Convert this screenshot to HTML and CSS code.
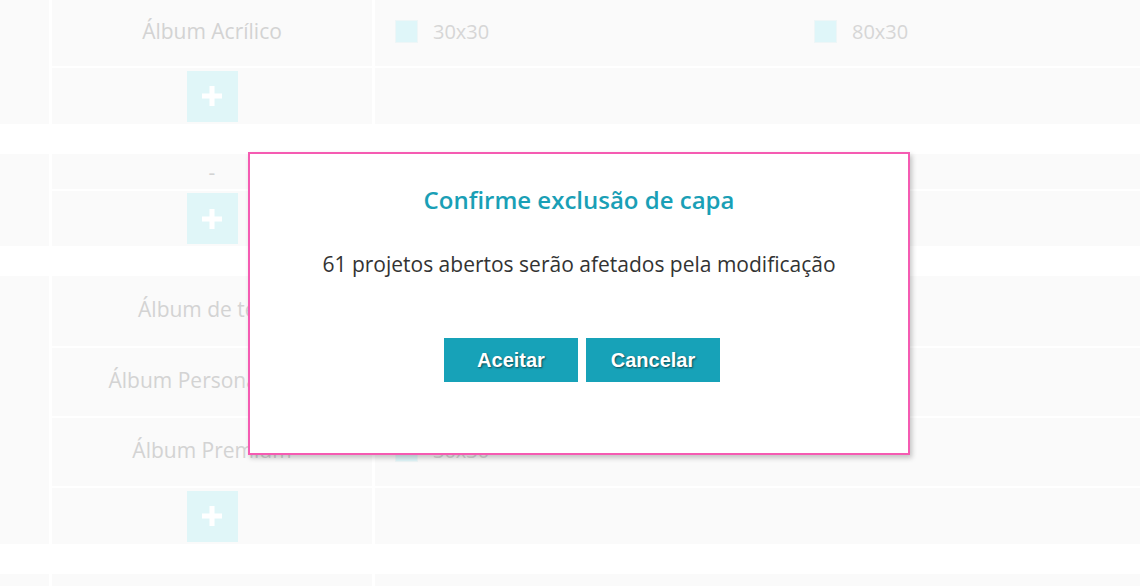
FILE: index.html
```html
<!DOCTYPE html>
<html lang="pt">
<head>
<meta charset="utf-8">
<title>Capas</title>
<link rel="stylesheet" href="styles.css">
</head>
<body>
<div class="table">
  <div class="group">
    <div class="side" style="grid-row: span 2"></div>
    <div class="cell name h66 up">Álbum Acrílico</div>
    <div class="cell opts h66 up">
      <label class="opt"><span class="box"></span>30x30</label>
      <label class="opt"><span class="box"></span>80x30</label>
    </div>
    <div class="cell name h56"><button class="add"><svg viewBox="0 0 24 24" width="24" height="24"><path d="M12 2v20M2 12h20" stroke="#fff" stroke-width="5"/></svg></button></div>
    <div class="cell opts h56"></div>
  </div>

  <div class="group">
    <div class="side" style="grid-row: span 2"></div>
    <div class="cell name h35">-</div>
    <div class="cell opts h35"></div>
    <div class="cell name h55"><button class="add"><svg viewBox="0 0 24 24" width="24" height="24"><path d="M12 2v20M2 12h20" stroke="#fff" stroke-width="5"/></svg></button></div>
    <div class="cell opts h55"></div>
  </div>

  <div class="group">
    <div class="side" style="grid-row: span 4"></div>
    <div class="cell name h70 up">Álbum de teste</div>
    <div class="cell opts h70 up">
      <label class="opt"><span class="box"></span>30x30</label>
    </div>
    <div class="cell name h68 up">Álbum Personalizado</div>
    <div class="cell opts h68 up">
      <label class="opt"><span class="box"></span>30x30</label>
    </div>
    <div class="cell name h68 up">Álbum Premium</div>
    <div class="cell opts h68 up">
      <label class="opt"><span class="box"></span>30x30</label>
    </div>
    <div class="cell name h56"><button class="add"><svg viewBox="0 0 24 24" width="24" height="24"><path d="M12 2v20M2 12h20" stroke="#fff" stroke-width="5"/></svg></button></div>
    <div class="cell opts h56"></div>
  </div>

  <div class="group">
    <div class="side"></div>
    <div class="cell name h66"></div>
    <div class="cell opts h66"></div>
  </div>
</div>

<div class="modal">
  <h2 class="modal-title">Confirme exclusão de capa</h2>
  <p class="modal-text">61 projetos abertos serão afetados pela modificação</p>
  <div class="modal-actions">
    <button class="btn">Aceitar</button>
    <button class="btn">Cancelar</button>
  </div>
</div>
</body>
</html>
```
FILE: styles.css
```css
html, body {
  margin: 0;
  padding: 0;
  background: #fff;
  overflow: hidden;
  height: 586px;
}
body {
  font-family: "Open Sans", "Liberation Sans", sans-serif;
}
.table {
  display: flex;
  flex-direction: column;
  gap: 30px;
}
.group {
  display: grid;
  grid-template-columns: 49px 320px 1fr;
  column-gap: 3px;
  row-gap: 2px;
}
.side {
  background: #fafafa;
}
.cell {
  background: #fafafa;
  display: flex;
  align-items: center;
  color: #d3d3d3;
  font-size: 21px;
  box-sizing: border-box;
}
.up {
  padding-bottom: 4px;
}
.name {
  justify-content: center;
}
.opts {
  padding-left: 20px;
}
.h35 { height: 35px; }
.h55 { height: 55px; }
.h56 { height: 56px; }
.h66 { height: 66px; }
.h68 { height: 68px; }
.h70 { height: 70px; }
.opt {
  display: flex;
  align-items: center;
  gap: 15px;
  width: 419px;
  color: #d6d6d6;
  font-size: 20px;
}
.box {
  width: 21px;
  height: 21px;
  background: #dff6f9;
  border: 1px solid #eef6f7;
}
.add {
  width: 51px;
  height: 51px;
  border: 0;
  padding: 0;
  background: #e0f6f8;
  display: flex;
  align-items: center;
  justify-content: center;
}
.modal {
  position: absolute;
  left: 248px;
  top: 152px;
  width: 662px;
  height: 303px;
  box-sizing: border-box;
  background: #fff;
  border: 2px solid #f55bb2;
  box-shadow: 2px 3px 5px rgba(0, 0, 0, 0.22);
  display: flex;
  flex-direction: column;
  align-items: center;
  padding-top: 29px;
}
.modal-title {
  margin: 0;
  font-size: 24px;
  font-weight: 600;
  line-height: 34px;
  color: #1a9fb6;
}
.modal-text {
  margin: 33px 0 0;
  font-size: 21px;
  line-height: 28px;
  color: #333;
}
.modal-actions {
  margin-top: 60px;
  margin-left: 6px;
  display: flex;
  gap: 8px;
}
.btn {
  width: 134px;
  height: 44px;
  border: 0;
  background: #17a2b8;
  color: #fff;
  font-family: "Liberation Sans", Arial, sans-serif;
  font-weight: bold;
  font-size: 20px;
  text-shadow: 1px 1px 2px rgba(0, 0, 0, 0.55);
  padding: 0;
}
```
